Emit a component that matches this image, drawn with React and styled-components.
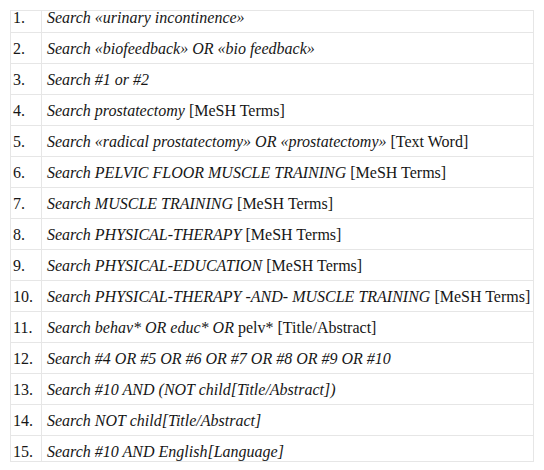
import React from "react";
import styled, { createGlobalStyle } from "styled-components";

const Global = createGlobalStyle`
  html, body { margin: 0; padding: 0; background: #fff; }
  body { padding: 10px; font-family: 'Liberation Serif', serif; }
`;

const Table = styled.table`
  border-collapse: collapse;
  width: 524px;
  table-layout: fixed;
  font-family: 'Liberation Serif', serif;
  font-size: 16px;
  color: #161616;
`;

const Row = styled.tr``;

const Cell = styled.td`
  font-family: 'Liberation Serif', serif;
  border: 1px solid #e6e6e6;
  white-space: nowrap;
  vertical-align: top;
  height: ${(p) => (p.$first ? 22 : p.$last ? 24 : 31)}px;
  padding: ${(p) => (p.$first ? "0px" : "7px")} 0 0 ${(p) => (p.$num ? "2px" : "5px")};
  box-sizing: border-box;
  line-height: ${(p) => (p.$first ? 14 : 18)}px;
  width: ${(p) => (p.$num ? "31px" : "auto")};
`;

const Q = styled.i`
  font-style: italic;
  font-family: 'Liberation Serif', serif;
`;

const rows = [
  [<Q>Search «urinary incontinence»</Q>],
  [<Q>Search «biofeedback» OR «bio feedback»</Q>],
  [<Q>Search #1 or #2</Q>],
  [<Q>Search prostatectomy</Q>, " [MeSH Terms]"],
  [<Q>Search «radical prostatectomy» OR «prostatectomy»</Q>, " [Text Word]"],
  [<Q>Search PELVIC FLOOR MUSCLE TRAINING</Q>, " [MeSH Terms]"],
  [<Q>Search MUSCLE TRAINING</Q>, " [MeSH Terms]"],
  [<Q>Search PHYSICAL-THERAPY</Q>, " [MeSH Terms]"],
  [<Q>Search PHYSICAL-EDUCATION</Q>, " [MeSH Terms]"],
  [<Q>Search PHYSICAL-THERAPY -AND- MUSCLE TRAINING</Q>, " [MeSH Terms]"],
  [<Q>Search behav* OR educ* OR</Q>, " pelv* [Title/Abstract]"],
  [<Q>Search #4 OR #5 OR #6 OR #7 OR #8 OR #9 OR #10</Q>],
  [<Q>Search #10 AND (NOT child[Title/Abstract])</Q>],
  [<Q>Search NOT child[Title/Abstract]</Q>],
  [<Q>Search #10 AND English[Language]</Q>],
];

export default function App() {
  return (
    <>
      <Global />
      <Table>
        <tbody>
          {rows.map((parts, i) => {
            const first = i === 0;
            const last = i === rows.length - 1;
            return (
              <Row key={i}>
                <Cell $num $first={first} $last={last}>{i + 1}.</Cell>
                <Cell $first={first} $last={last}>
                  {parts.map((p, j) => (
                    <React.Fragment key={j}>{p}</React.Fragment>
                  ))}
                </Cell>
              </Row>
            );
          })}
        </tbody>
      </Table>
    </>
  );
}
